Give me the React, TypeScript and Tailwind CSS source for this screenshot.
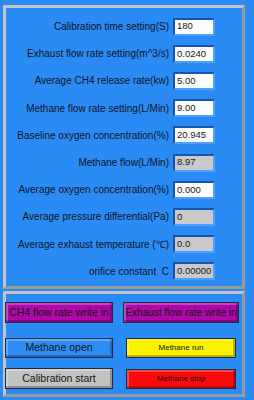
import React from 'react';

const rows: { label: string; value: string; readOnly?: boolean }[] = [
  { label: 'Calibration time setting(S)', value: '180' },
  { label: 'Exhaust flow rate setting(m^3/s)', value: '0.0240' },
  { label: 'Average CH4 release rate(kw)', value: '5.00' },
  { label: 'Methane flow rate setting(L/Min)', value: '9.00' },
  { label: 'Baseline oxygen concentration(%)', value: '20.945' },
  { label: 'Methane flow(L/Min)', value: '8.97', readOnly: true },
  { label: 'Average oxygen concentration(%)', value: '0.000' },
  { label: 'Average pressure differential(Pa)', value: '0', readOnly: true },
  { label: 'Average exhaust temperature (℃)', value: '0.0', readOnly: true },
  { label: 'orifice constant  C', value: '0.00000', readOnly: true },
];

// bevelled button like the old control panels
function PanelButton({ label, className }: { label: string; className: string }) {
  return (
    <button
      className={
        'flex items-center justify-center border border-[#1c2a44] shadow-[inset_-2px_-2px_0_rgba(0,0,0,0.25),inset_2px_2px_0_rgba(255,255,255,0.25)] text-[#141414] whitespace-nowrap ' +
        className
      }
    >
      {label}
    </button>
  );
}

export default function App() {
  return (
    <div
      className="w-[254px] h-[400px] bg-[#2a8bf5] pt-[5px] pl-[3px] flex flex-col gap-[2px] overflow-hidden"
      style={{ fontFamily: '"Liberation Sans", Arial, sans-serif' }}
    >
      {/* Settings panel */}
      <div className="w-[242px] h-[284px] border-[3px] border-t-[#c4c4c4] border-l-[#c4c4c4] border-b-[#9a9a9a] border-r-[#9a9a9a] pt-[5px] flex flex-col">
        {rows.map((r) => (
          <div key={r.label} className="h-[27.2px] flex items-center">
            <span className="flex-1 text-right text-[10px] text-[#10141e] pr-[4px] whitespace-pre">{r.label}</span>
            <div
              className={
                'w-[42px] h-[18px] border-2 border-t-[#1555b0] border-l-[#1555b0] border-b-[#4aa0ff] border-r-[#4aa0ff] flex items-center pl-[2px] text-[9.5px] text-[#1a1a1a] overflow-hidden ' +
                (r.readOnly ? 'bg-[#c9c9c9]' : 'bg-[#fbfbfb]')
              }
            >
              {r.value}
            </div>
            <div className="w-[27px]" />
          </div>
        ))}
      </div>

      {/* Buttons panel */}
      <div className="w-[242px] h-[106px] border-[3px] border-t-[#c4c4c4] border-l-[#c4c4c4] border-b-[#9a9a9a] border-r-[#9a9a9a] pt-[8px] flex flex-col">
        <div className="flex items-center h-[21px]">
          <PanelButton label="CH4 flow rate write in" className="-ml-[1px] w-[108px] h-[21px] bg-[#b008a8] text-[10.5px]" />
          <PanelButton label="Exhaust flow rate write in" className="ml-[10px] w-[116px] h-[21px] bg-[#b008a8] text-[10px]" />
        </div>
        <div className="flex items-center h-[21px] mt-[14px]">
          <PanelButton label="Methane open" className="-ml-[1px] w-[108px] h-[20px] bg-[#2c8ef5] text-[10.5px]" />
          <PanelButton label="Methane run" className="ml-[13px] w-[110px] h-[20px] bg-[#fbf200] text-[8px]" />
        </div>
        <div className="flex items-center h-[21px] mt-[10px]">
          <PanelButton label="Calibration start" className="-ml-[1px] w-[108px] h-[21px] bg-[#c2c2c2] text-[10.5px]" />
          <PanelButton label="Methane stop" className="ml-[13px] w-[110px] h-[20px] bg-[#fa0a0a] text-[8px]" />
        </div>
      </div>
    </div>
  );
}
